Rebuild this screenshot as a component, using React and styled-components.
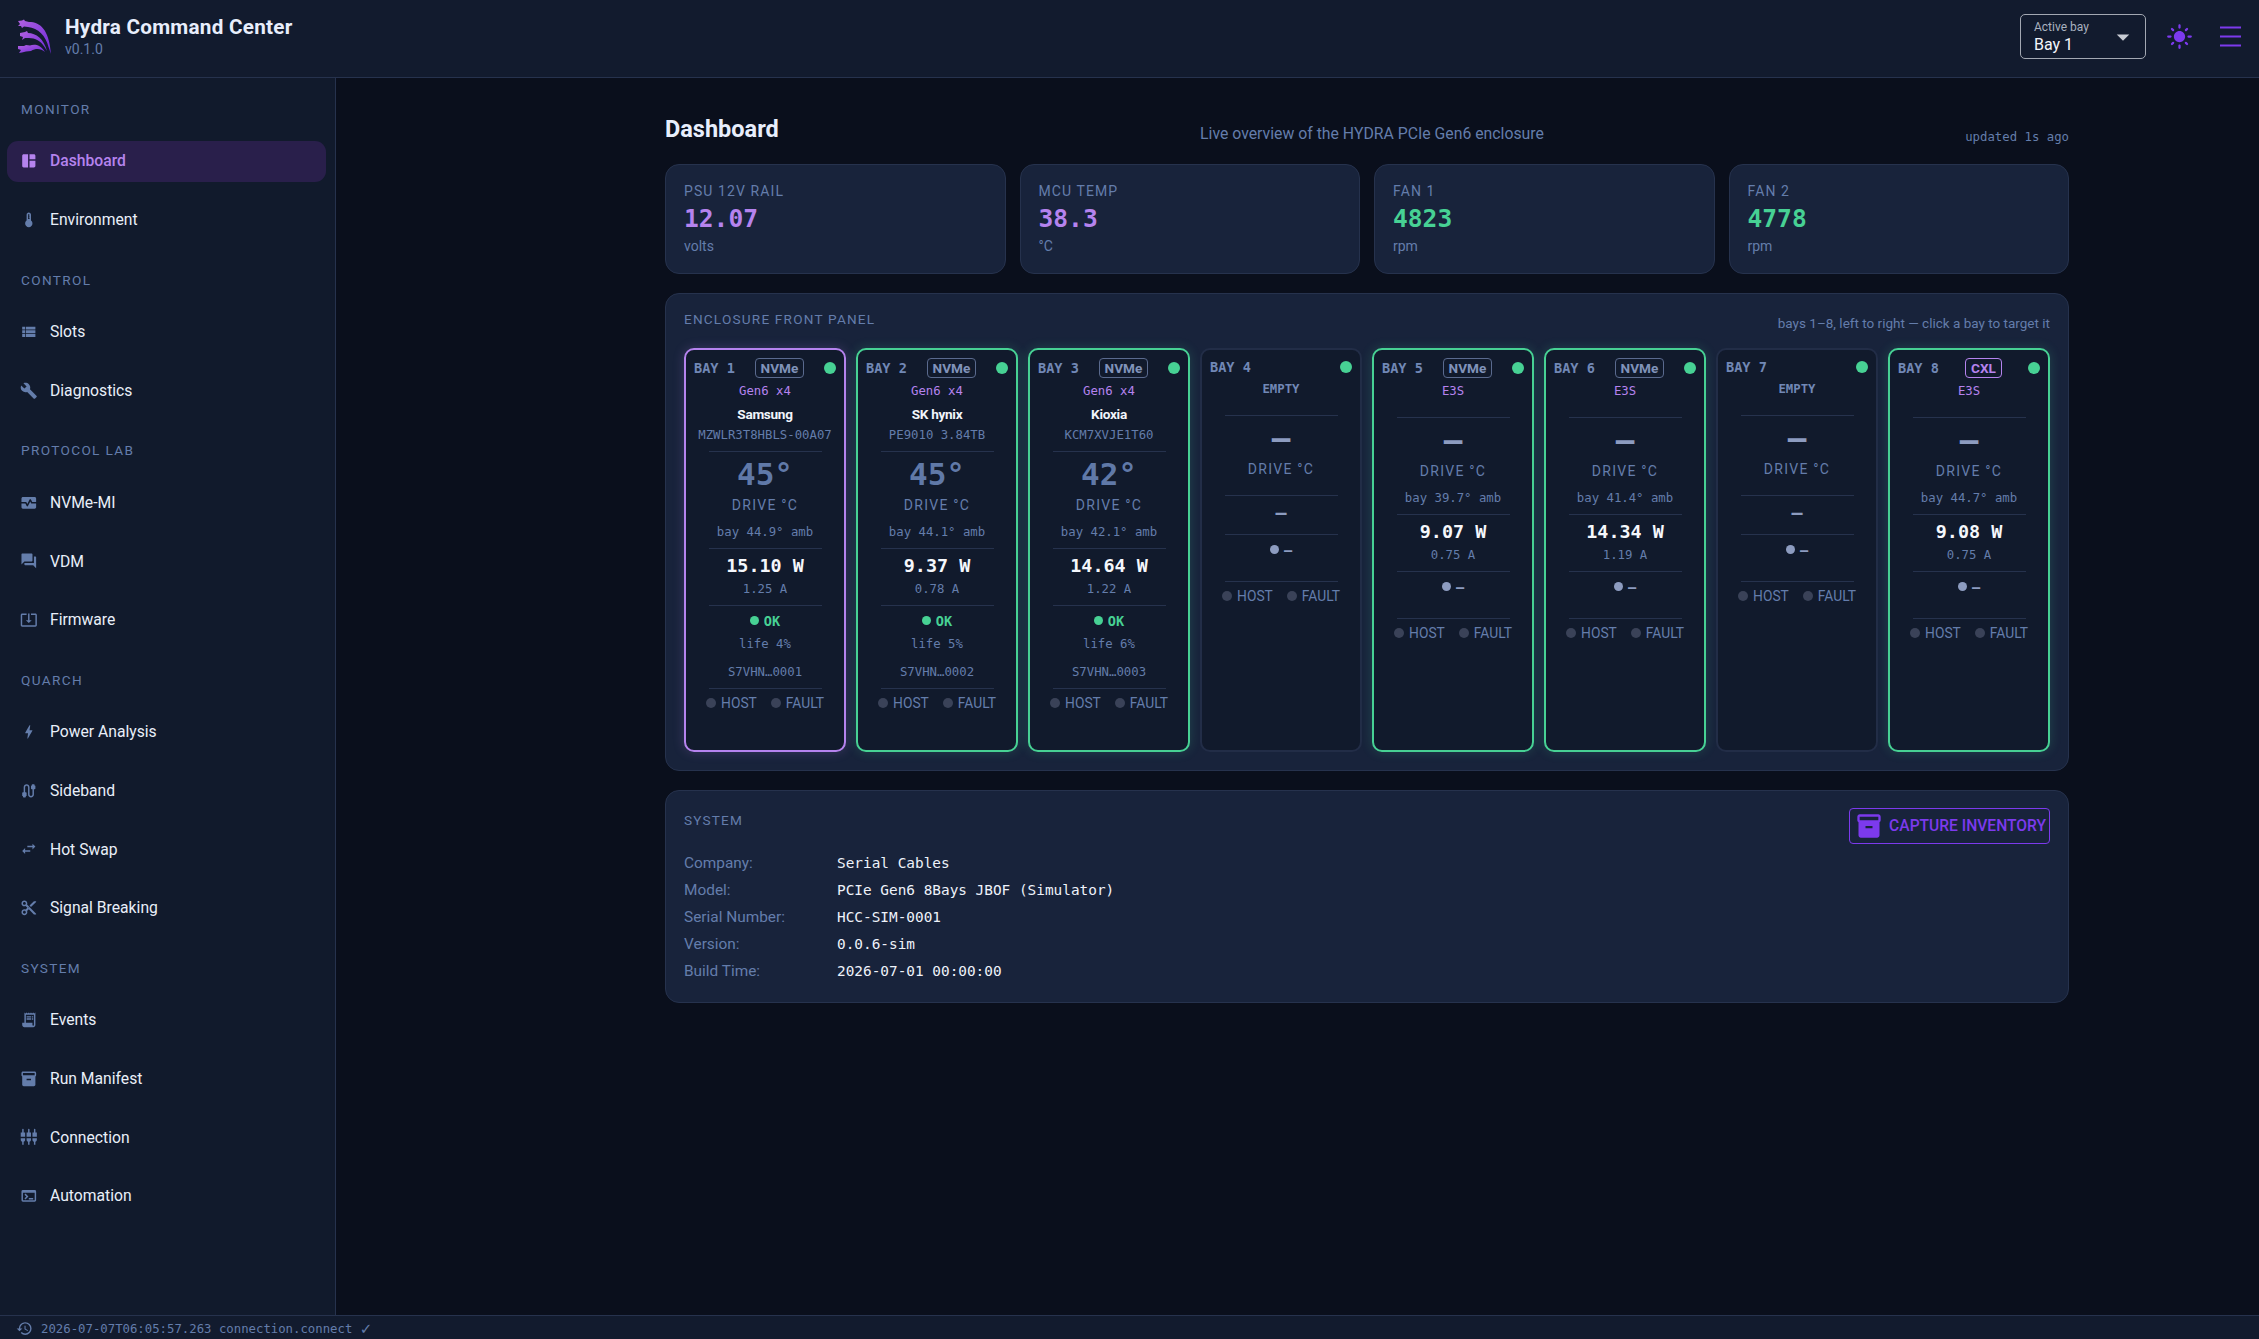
import React from 'react'
import styled, { createGlobalStyle } from 'styled-components'
import {
  MdSpaceDashboard, MdDeviceThermostat, MdViewList, MdBuild, MdMonitorHeart, MdForum,
  MdSystemUpdateAlt, MdBolt, MdCable, MdSwapHoriz, MdContentCut, MdReceiptLong,
  MdInventory2, MdSettingsInputComposite, MdTerminal, MdHistory, MdLightMode,
  MdArrowDropDown,
} from 'react-icons/md'

const MONO = `'DejaVu Sans Mono', monospace`
const SANS = `Roboto, sans-serif`
const MUTED = '#647dab'
const PURPLE = '#b583ee'
const GREEN = '#47d194'
const ACCENT = '#7c3aed'

const GlobalStyle = createGlobalStyle`
  html, body { margin: 0; padding: 0; height: 100%; background: #0a0f1c; }
  * { box-sizing: border-box; }
  body { font-family: ${SANS}; color: #e6edf8; }
`

const Shell = styled.div`
  height: 100vh;
  display: flex;
  flex-direction: column;
  overflow: hidden;
`

const Topbar = styled.header`
  height: 78px;
  flex: none;
  display: flex;
  align-items: center;
  justify-content: space-between;
  padding: 0 18px 4px 16px;
  background: #121b2e;
  border-bottom: 1px solid #26324d;
`

const Brand = styled.div`
  display: flex;
  align-items: center;
  gap: 13px;
`

const BrandName = styled.div`
  font-size: 20.7px;
  font-weight: 700;
  line-height: 24px;
  letter-spacing: 0.25px;
  color: #e8eefc;
`

const BrandVersion = styled.div`
  font-size: 14px;
  line-height: 20px;
  color: ${MUTED};
`

const TopActions = styled.div`
  display: flex;
  align-items: center;
  color: ${ACCENT};
`

const BaySelect = styled.div`
  width: 126px;
  height: 45px;
  margin-right: 19.5px;
  padding: 5px 13px;
  position: relative;
  border: 1.5px solid #a3a8b2;
  border-radius: 5px;
`

const SelectLabel = styled.div`
  font-size: 12px;
  line-height: 15px;
  color: #a9b1bf;
`

const SelectValue = styled.div`
  font-size: 16px;
  line-height: 19px;
  color: #f2f5fb;
`

const SelectArrow = styled(MdArrowDropDown)`
  position: absolute;
  right: 7px;
  top: 7px;
  color: #c8ccd4;
`

const ThemeIcon = styled(MdLightMode)`
  font-size: 27px;
  margin-right: 27.5px;
`

const MenuGlyph = styled.svg`
  width: 21px;
  height: 21px;
  stroke: ${ACCENT};
  stroke-width: 2;
`

const Body = styled.div`
  flex: 1;
  min-height: 0;
  display: flex;
`

const Sidebar = styled.nav`
  width: 336px;
  flex: none;
  padding: 22px 9px 0 7px;
  background: #111a2c;
  border-right: 1px solid #26324d;
`

const NavSection = styled.section`
  display: flex;
  flex-direction: column;
  gap: 17.7px;
  margin-bottom: 30px;
`

const NavLabel = styled.div`
  height: 18px;
  margin: 0 0 5.3px 14px;
  font-size: 13.6px;
  line-height: 18px;
  letter-spacing: 1.36px;
  color: ${MUTED};
`

const NavItem = styled.div`
  height: 41px;
  display: flex;
  align-items: center;
  gap: 12.4px;
  padding: 0 0 1px 13px;
  border-radius: 11px;
  font-size: 15.7px;
  font-weight: ${p => (p.$active ? 500 : 400)};
  color: ${p => (p.$active ? PURPLE : '#e9eff9')};
  background: ${p => (p.$active ? '#291f4b' : 'transparent')};

  svg {
    flex: none;
    font-size: 17.6px;
    color: ${p => (p.$active ? PURPLE : MUTED)};
  }
`

const Main = styled.main`
  flex: 1;
  min-width: 0;
  padding: 29px 190px 0 329px;
`

const PageHead = styled.div`
  display: flex;
  align-items: flex-start;
  justify-content: space-between;
  height: 57px;
`

const PageTitle = styled.h1`
  margin: 0;
  font-size: 23.5px;
  font-weight: 700;
  line-height: 44px;
  color: #e8eefc;
`

const PageSub = styled.div`
  margin-top: 17px;
  font-size: 15.8px;
  line-height: 20px;
  color: ${MUTED};
`

const Updated = styled.div`
  margin-top: 22px;
  font-family: ${MONO};
  font-size: 12.32px;
  line-height: 16px;
  color: ${MUTED};
`

const StatGrid = styled.div`
  display: grid;
  grid-template-columns: repeat(4, 1fr);
  gap: 14px;
  margin-bottom: 19px;
`

const Panel = styled.section`
  background: #18233b;
  border: 1px solid #26324d;
  border-radius: 14px;
`

const StatCard = styled(Panel)`
  height: 110px;
  padding: 16px 18px 0;
`

const StatLabel = styled.div`
  font-size: 14px;
  line-height: 20px;
  letter-spacing: 1.1px;
  color: ${MUTED};
`

const StatValue = styled.div`
  font-family: ${MONO};
  font-size: 24.6px;
  font-weight: 700;
  line-height: 28px;
  margin-top: 4px;
  color: ${p => (p.$green ? GREEN : PURPLE)};
`

const StatUnit = styled.div`
  font-size: 14px;
  line-height: 20px;
  margin-top: 3px;
  color: ${MUTED};
`

const EnclosurePanel = styled(Panel)`
  height: 478px;
  padding: 15px 18px 0;
  margin-bottom: 19px;
`

const PanelHead = styled.div`
  display: flex;
  justify-content: space-between;
  align-items: flex-start;
  height: 20px;
  margin-bottom: 19px;
`

const PanelTitle = styled.div`
  font-size: 13.6px;
  line-height: 20px;
  letter-spacing: 1.2px;
  color: ${MUTED};
`

const PanelNote = styled.div`
  margin-top: 4px;
  font-size: 13.5px;
  line-height: 20px;
  color: ${MUTED};
`

const BayGrid = styled.div`
  display: grid;
  grid-template-columns: repeat(8, 1fr);
  gap: 10px;
`

const toneBorder = { active: PURPLE, ok: GREEN, empty: '#222d47' }
const toneGlow = {
  active: 'rgba(181, 131, 238, 0.22)',
  ok: 'rgba(71, 209, 148, 0.2)',
  empty: 'rgba(0, 0, 0, 0)',
}

const BayCard = styled.article`
  height: 404px;
  padding: 8px 8px 0;
  display: flex;
  flex-direction: column;
  text-align: center;
  background: #111a2c;
  border: 2px solid ${p => toneBorder[p.$tone]};
  border-radius: 10px;
  box-shadow: 0 0 12px ${p => toneGlow[p.$tone]};
`

const BayHead = styled.div`
  display: flex;
  align-items: center;
  justify-content: space-between;
  min-height: 18px;
`

const BayName = styled.div`
  font-family: ${MONO};
  font-size: 13.6px;
  font-weight: 700;
  line-height: 18px;
  color: #7188b6;
`

const Badge = styled.div`
  height: 20px;
  padding: 0 5px;
  font-size: 13.6px;
  font-weight: 700;
  line-height: 18px;
  color: ${p => (p.$cxl ? PURPLE : '#8093ba')};
  border: 1px solid ${p => (p.$cxl ? PURPLE : '#5a6a8e')};
  border-radius: 4px;
`

const LinkDot = styled.span`
  width: 12px;
  height: 12px;
  border-radius: 50%;
  background: ${GREEN};
`

const FormFactor = styled.div`
  margin-top: 4px;
  font-family: ${MONO};
  font-size: 12.32px;
  font-weight: ${p => (p.$empty ? 700 : 500)};
  line-height: 18px;
  color: ${p => (p.$empty ? '#7188b6' : PURPLE)};
`

const Identity = styled.div`
  min-height: 10px;
`

const Vendor = styled.div`
  margin-top: 5px;
  font-size: 13.6px;
  font-weight: 700;
  line-height: 18px;
  letter-spacing: -0.3px;
  color: #f2f5fb;
`

const Model = styled.div`
  margin-top: 3px;
  font-family: ${MONO};
  font-size: 12.32px;
  line-height: 18px;
  white-space: nowrap;
  color: ${MUTED};
`

const Rule = styled.hr`
  width: 113px;
  flex: none;
  margin: 7px auto;
  border: 0;
  border-top: 1px solid #26324d;
`

const Temp = styled.div`
  height: 36px;
  font-family: ${MONO};
  font-size: 31px;
  font-weight: 700;
  line-height: 30px;
  color: ${p => (p.$none ? '#8d9cc0' : '#6079a8')};
`

const DriveLabel = styled.div`
  margin-top: 1px;
  font-size: 14px;
  line-height: 18px;
  letter-spacing: 1.25px;
  color: ${MUTED};
`

const Ambient = styled.div`
  margin-top: 10px;
  font-family: ${MONO};
  font-size: 12.32px;
  line-height: 17px;
  white-space: nowrap;
  color: ${MUTED};
  &:empty { height: 0; }
`

const Power = styled.div`
  height: 24px;
  margin-top: -2.5px;
  font-family: ${MONO};
  font-size: 18.4px;
  font-weight: 700;
  line-height: 24px;
  color: ${p => (p.$none ? '#8d9cc0' : '#f5f7fc')};
`

const Amps = styled.div`
  margin-top: 2px;
  font-family: ${MONO};
  font-size: 12.32px;
  line-height: 18px;
  color: ${MUTED};
  &:empty { height: 0; }
`

const Health = styled.div`
  display: flex;
  align-items: center;
  justify-content: center;
  gap: 5px;
  height: 18px;
  margin-top: -1px;
  font-family: ${MONO};
  font-size: 13.6px;
  font-weight: 700;
  color: ${p => (p.$none ? '#8d9cc0' : GREEN)};
`

const HealthDot = styled.span`
  width: 9px;
  height: 9px;
  border-radius: 50%;
  background: ${p => (p.$none ? '#8d9cc0' : GREEN)};
`

const Life = styled.div`
  margin-top: 5px;
  font-family: ${MONO};
  font-size: 12.32px;
  line-height: 18px;
  color: ${MUTED};
  &:empty { height: 0; }
`

const SerialNo = styled.div`
  margin-top: 10px;
  font-family: ${MONO};
  font-size: 12.32px;
  line-height: 18px;
  color: ${MUTED};
  &:empty { height: 0; }
`

const LedRow = styled.div`
  display: flex;
  align-items: center;
  justify-content: center;
  gap: 14px;
  margin-top: -2px;
  font-size: 13.8px;
  line-height: 18px;
  color: ${MUTED};
`

const Led = styled.span`
  display: inline-flex;
  align-items: center;
  gap: 5px;
  white-space: nowrap;

  &::before {
    content: '';
    width: 10px;
    height: 10px;
    border-radius: 50%;
    background: #3a4258;
  }
`

const SystemPanel = styled(Panel)`
  height: 213px;
  padding: 17px 18px 0;
`

const SystemHead = styled.div`
  display: flex;
  justify-content: space-between;
  align-items: flex-start;
  height: 42px;
`

const SystemTitle = styled(PanelTitle)`
  line-height: 24px;
`

const CaptureButton = styled.button`
  height: 36px;
  padding: 0 3px 0 5px;
  display: flex;
  align-items: center;
  gap: 6px;
  background: transparent;
  border: 1px solid ${ACCENT};
  border-radius: 4px;
  font-family: ${SANS};
  font-size: 15.6px;
  font-weight: 500;
  color: ${ACCENT};

  svg { font-size: 28px; }
`

const InfoRow = styled.div`
  display: grid;
  grid-template-columns: 153px 1fr;
  align-items: center;
  height: 26.8px;
`

const InfoKey = styled.div`
  font-size: 15.4px;
  color: ${MUTED};
`

const InfoValue = styled.div`
  font-family: ${MONO};
  font-size: 14.4px;
  color: #eef2fa;
`

const StatusBar = styled.footer`
  height: 24px;
  flex: none;
  display: flex;
  align-items: center;
  gap: 8px;
  padding: 2px 0 0 16px;
  background: #121b2e;
  border-top: 1px solid #26324d;
  font-family: ${MONO};
  font-size: 12.32px;
  color: ${MUTED};

  svg { font-size: 17px; }
`

const CheckMark = styled.span`
  font-family: 'DejaVu Sans', sans-serif;
  font-size: 15px;
  line-height: 14px;
  vertical-align: -1px;
`

const HydraLogo = () => (
  <svg width="36" height="36" viewBox="0 0 36 36">
    <defs>
      <linearGradient id="hydra" x1="0" y1="0" x2="1" y2="1">
        <stop offset="0" stopColor="#b061e0" />
        <stop offset="1" stopColor="#6d28d9" />
      </linearGradient>
    </defs>
    <g fill="url(#hydra)">
      <path d="M2 2 L6 1.5 L8 .5 L9 2 L13 3 C24 3 33 10 35 35 L32.5 28 C30 17 22 9 12 8 L8 7.5 L6 9 L5 7 L2 7 L4 5 Z" />
      <path d="M4 14 L9 13 L11 12 L12 14 C20 14 28 20 31 32 L28.5 28 C25 22 19 19 13 19 L9 19 L6 21 L7 18 L4 17 Z" />
      <path d="M2 27 L8 27 L10 26 L14 26.5 C18 25 24 25 29 33 C25 29.5 20 29 15 32 L10 32.5 L6 33.5 L3 34 L5 31 L2 30 Z" />
    </g>
  </svg>
)

const NAV = [
  { label: 'MONITOR', items: [[MdSpaceDashboard, 'Dashboard', true], [MdDeviceThermostat, 'Environment']] },
  { label: 'CONTROL', items: [[MdViewList, 'Slots'], [MdBuild, 'Diagnostics']] },
  { label: 'PROTOCOL LAB', items: [[MdMonitorHeart, 'NVMe-MI'], [MdForum, 'VDM'], [MdSystemUpdateAlt, 'Firmware']] },
  { label: 'QUARCH', items: [[MdBolt, 'Power Analysis'], [MdCable, 'Sideband'], [MdSwapHoriz, 'Hot Swap'], [MdContentCut, 'Signal Breaking']] },
  { label: 'SYSTEM', items: [[MdReceiptLong, 'Events'], [MdInventory2, 'Run Manifest'], [MdSettingsInputComposite, 'Connection'], [MdTerminal, 'Automation']] },
]

const STATS = [
  { label: 'PSU 12V RAIL', value: '12.07', unit: 'volts' },
  { label: 'MCU TEMP', value: '38.3', unit: '°C' },
  { label: 'FAN 1', value: '4823', unit: 'rpm', green: true },
  { label: 'FAN 2', value: '4778', unit: 'rpm', green: true },
]

const BAYS = [
  { n: 1, tone: 'active', badge: 'NVMe', tag: 'Gen6 x4', vendor: 'Samsung', model: 'MZWLR3T8HBLS-00A07', temp: '45°', amb: '44.9', watts: '15.10 W', amps: '1.25 A', life: 'life 4%', serial: 'S7VHN…0001' },
  { n: 2, tone: 'ok', badge: 'NVMe', tag: 'Gen6 x4', vendor: 'SK hynix', model: 'PE9010 3.84TB', temp: '45°', amb: '44.1', watts: '9.37 W', amps: '0.78 A', life: 'life 5%', serial: 'S7VHN…0002' },
  { n: 3, tone: 'ok', badge: 'NVMe', tag: 'Gen6 x4', vendor: 'Kioxia', model: 'KCM7XVJE1T60', temp: '42°', amb: '42.1', watts: '14.64 W', amps: '1.22 A', life: 'life 6%', serial: 'S7VHN…0003' },
  { n: 4, tone: 'empty', tag: 'EMPTY' },
  { n: 5, tone: 'ok', badge: 'NVMe', tag: 'E3S', amb: '39.7', watts: '9.07 W', amps: '0.75 A' },
  { n: 6, tone: 'ok', badge: 'NVMe', tag: 'E3S', amb: '41.4', watts: '14.34 W', amps: '1.19 A' },
  { n: 7, tone: 'empty', tag: 'EMPTY' },
  { n: 8, tone: 'ok', badge: 'CXL', tag: 'E3S', amb: '44.7', watts: '9.08 W', amps: '0.75 A' },
]

const SYSTEM = [
  ['Company:', 'Serial Cables'],
  ['Model:', 'PCIe Gen6 8Bays JBOF (Simulator)'],
  ['Serial Number:', 'HCC-SIM-0001'],
  ['Version:', '0.0.6-sim'],
  ['Build Time:', '2026-07-01 00:00:00'],
]

const Bay = ({ bay }) => {
  const healthy = Boolean(bay.life)
  return (
    <BayCard $tone={bay.tone}>
      <BayHead>
        <BayName>BAY {bay.n}</BayName>
        {bay.badge && <Badge $cxl={bay.badge === 'CXL'}>{bay.badge}</Badge>}
        <LinkDot />
      </BayHead>
      <FormFactor $empty={bay.tone === 'empty'}>{bay.tag}</FormFactor>
      <Identity>
        {bay.vendor && <Vendor>{bay.vendor}</Vendor>}
        {bay.model && <Model>{bay.model}</Model>}
      </Identity>
      <Rule />
      <Temp $none={!bay.temp}>{bay.temp || '—'}</Temp>
      <DriveLabel>DRIVE °C</DriveLabel>
      <Ambient>{bay.amb ? `bay ${bay.amb}° amb` : ''}</Ambient>
      <Rule />
      <Power $none={!bay.watts}>{bay.watts || '–'}</Power>
      <Amps>{bay.amps || ''}</Amps>
      <Rule />
      <Health $none={!healthy}>
        <HealthDot $none={!healthy} />
        {healthy ? 'OK' : '–'}
      </Health>
      <Life>{bay.life || ''}</Life>
      <SerialNo>{bay.serial || ''}</SerialNo>
      <Rule />
      <LedRow>
        <Led>HOST</Led>
        <Led>FAULT</Led>
      </LedRow>
    </BayCard>
  )
}

export default function App() {
  return (
    <Shell>
      <GlobalStyle />
      <Topbar>
        <Brand>
          <HydraLogo />
          <div>
            <BrandName>Hydra Command Center</BrandName>
            <BrandVersion>v0.1.0</BrandVersion>
          </div>
        </Brand>
        <TopActions>
          <BaySelect>
            <SelectLabel>Active bay</SelectLabel>
            <SelectValue>Bay 1</SelectValue>
            <SelectArrow size={30} />
          </BaySelect>
          <ThemeIcon />
          <MenuGlyph viewBox="0 0 21 21">
            <path d="M0 1.5H21M0 10.5H21M0 19.5H21" />
          </MenuGlyph>
        </TopActions>
      </Topbar>
      <Body>
        <Sidebar>
          {NAV.map(section => (
            <NavSection key={section.label}>
              <NavLabel>{section.label}</NavLabel>
              {section.items.map(([Icon, name, active]) => (
                <NavItem key={name} $active={active}>
                  <Icon />
                  {name}
                </NavItem>
              ))}
            </NavSection>
          ))}
        </Sidebar>
        <Main>
          <PageHead>
            <PageTitle>Dashboard</PageTitle>
            <PageSub>Live overview of the HYDRA PCIe Gen6 enclosure</PageSub>
            <Updated>updated 1s ago</Updated>
          </PageHead>
          <StatGrid>
            {STATS.map(stat => (
              <StatCard key={stat.label}>
                <StatLabel>{stat.label}</StatLabel>
                <StatValue $green={stat.green}>{stat.value}</StatValue>
                <StatUnit>{stat.unit}</StatUnit>
              </StatCard>
            ))}
          </StatGrid>
          <EnclosurePanel>
            <PanelHead>
              <PanelTitle>ENCLOSURE FRONT PANEL</PanelTitle>
              <PanelNote>bays 1–8, left to right — click a bay to target it</PanelNote>
            </PanelHead>
            <BayGrid>
              {BAYS.map(bay => <Bay key={bay.n} bay={bay} />)}
            </BayGrid>
          </EnclosurePanel>
          <SystemPanel>
            <SystemHead>
              <SystemTitle>SYSTEM</SystemTitle>
              <CaptureButton>
                <MdInventory2 />
                CAPTURE INVENTORY
              </CaptureButton>
            </SystemHead>
            {SYSTEM.map(([key, value]) => (
              <InfoRow key={key}>
                <InfoKey>{key}</InfoKey>
                <InfoValue>{value}</InfoValue>
              </InfoRow>
            ))}
          </SystemPanel>
        </Main>
      </Body>
      <StatusBar>
        <MdHistory />
        <span>2026-07-07T06:05:57.263 connection.connect <CheckMark>✓</CheckMark></span>
      </StatusBar>
    </Shell>
  )
}
